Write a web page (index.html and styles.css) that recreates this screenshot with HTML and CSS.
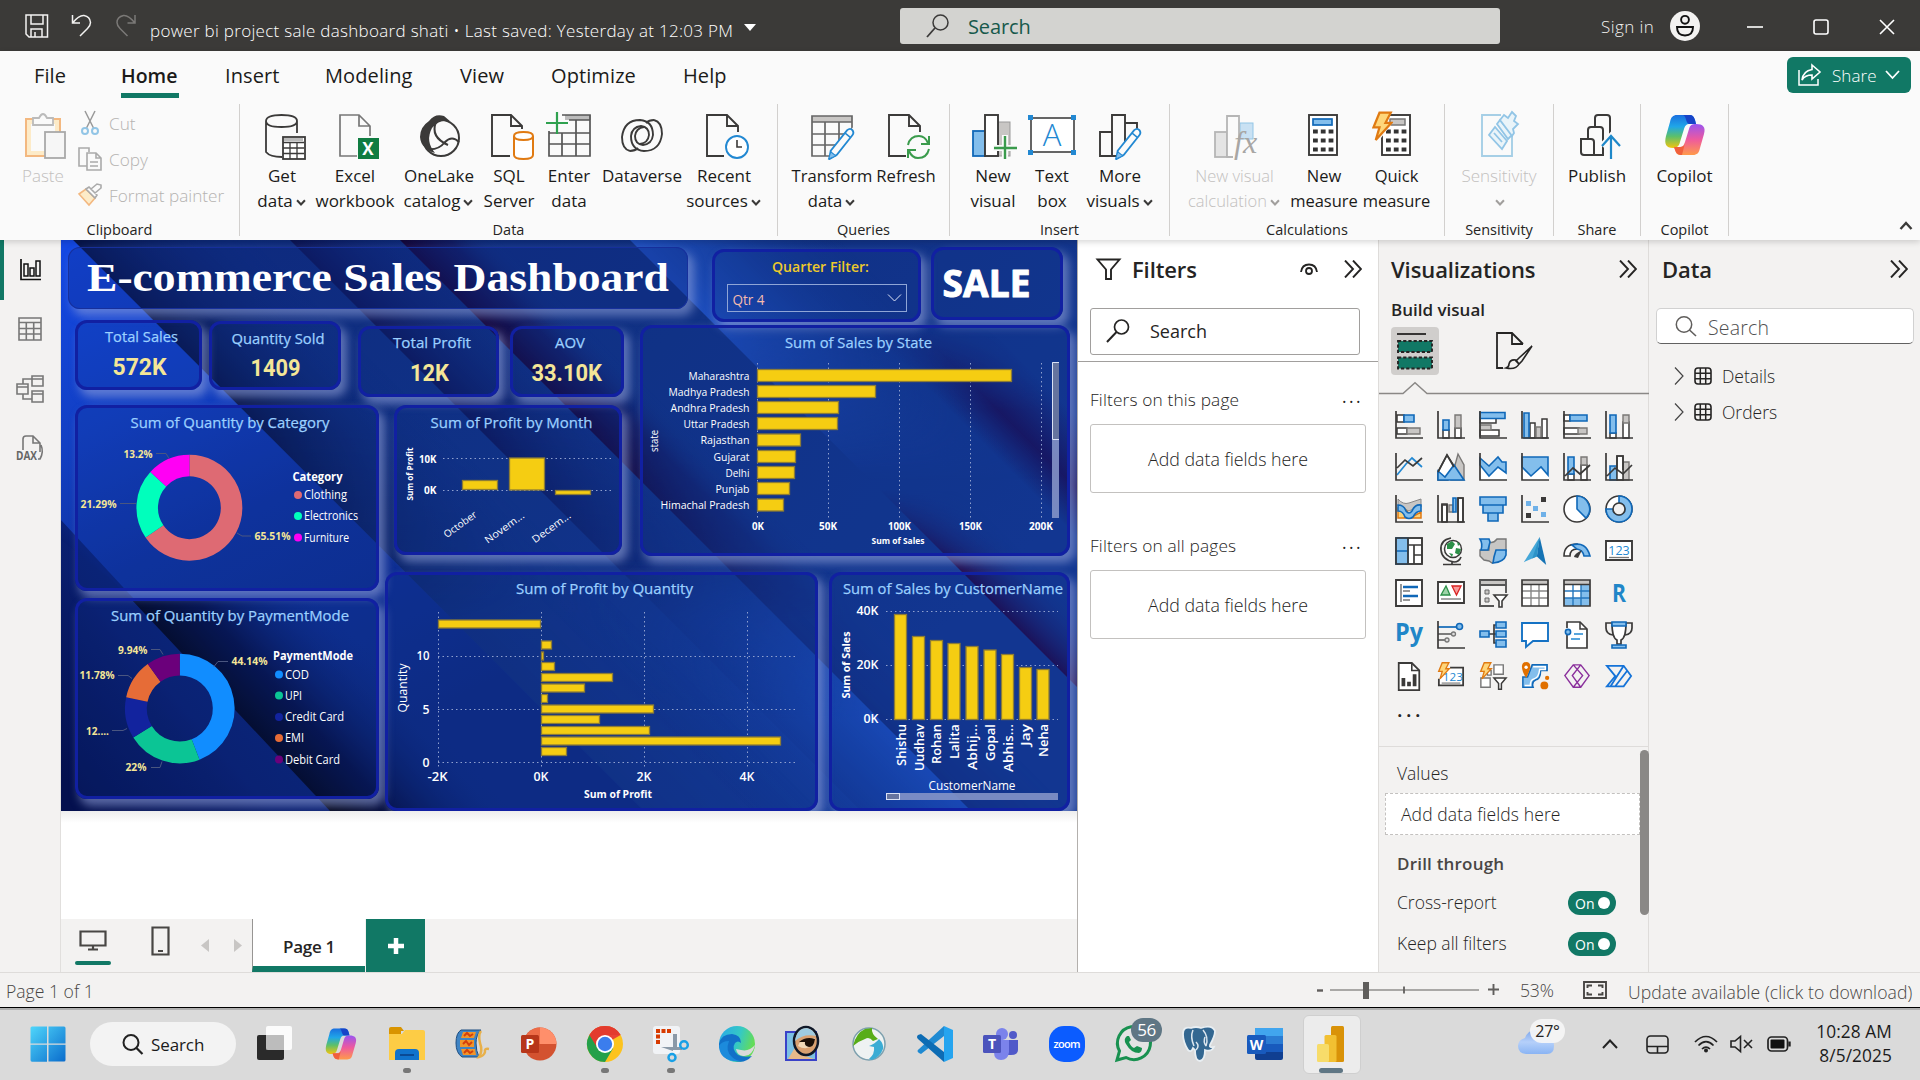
FILE: index.html
```html
<!DOCTYPE html>
<html lang="en">
<head>
<meta charset="utf-8">
<title>power bi project sale dashboard shati</title>
<link rel="stylesheet" href="styles.css">
</head>
<body>
<svg class="defs" width="0" height="0">
  <defs>
    <linearGradient id="cpA" x1="0" y1="0" x2="0" y2="1"><stop offset="0" stop-color="#1a6fe0"/><stop offset=".35" stop-color="#1fa6e8"/><stop offset=".65" stop-color="#5cc06a"/><stop offset="1" stop-color="#f2c40e"/></linearGradient>
    <linearGradient id="cpB" x1="0" y1="0" x2="0" y2="1"><stop offset="0" stop-color="#9a54f0"/><stop offset=".5" stop-color="#ee5a9e"/><stop offset="1" stop-color="#ff9a4a"/></linearGradient>
    <symbol id="copilot" viewBox="0 0 44 44">
      <path d="M14 2h12c4 0 5 2 6 5l1 4h-6c-4 0-5 2-6 5l-4 13c-1 4-3 6-7 6-7 0-9-4-7-12L7 9c1-5 3-7 7-7z" fill="url(#cpA)"/>
      <path d="M20 2h6c4 0 5 2 6 5l1 4h-7c-3 0-3-9-6-9z" fill="#1744c8"/>
      <path d="M30 42H18c-4 0-5-2-6-5l-1-3h5c4 0 5-2 6-5l4-13c1-4 3-5 7-5 7 0 10 3 8 10l-4 14c-1 5-3 7-7 7z" fill="url(#cpB)"/>
      <path d="M11 34h6c3 0 4-1 5-4l-3 12c-5 0-6-2-8-8z" fill="#f0603c"/>
    </symbol>
    <symbol id="bolt" viewBox="0 0 14 20"><path d="M5 .8h7.500L9 7.500h4L2.500 19 5 10.500H1z" fill="#fed67a" stroke="#e07a12" stroke-width="1.500"/></symbol>
    <symbol id="pencil" viewBox="0 0 26 32"><path d="M3 23 19 3q3-2.500 5 0t0 5L9 27l-7 4z" fill="#fafafa" stroke="#2288d2" stroke-width="1.800"/><path d="M3 24l5 4-7 3z" fill="#83beec" stroke="#2288d2"/><path d="M17 6l5 4" stroke="#2288d2" stroke-width="1.500"/></symbol>
    <symbol id="dbl" viewBox="0 0 18 18"><path d="M1 .5 9 9l-8 8.500M9 .5 17 9l-8 8.500" fill="none" stroke="#252423" stroke-width="1.900"/></symbol>
    <symbol id="chev" viewBox="0 0 10 8"><path d="M1.500 2 5 5.800 8.500 2" fill="none" stroke="currentColor" stroke-width="1.800"/></symbol>
    <symbol id="tbl" viewBox="0 0 18 18"><rect x="1" y="1" width="16" height="16" rx="3" fill="none" stroke="#252423" stroke-width="1.600"/><path d="M1 6.300h16M1 11.700h16M6.300 1v16M11.700 1v16" stroke="#252423" stroke-width="1.500"/></symbol>
  </defs>
</svg>

<header class="titlebar">
  <svg class="tb-save" width="24" height="24"><path d="M1 1h21.500v22H4L1 20z M6 1v9h12V1M6 23v-8h11v8M10 23v-5" fill="none" stroke="#f3f2f1" stroke-width="1.500"/></svg>
  <svg class="tb-undo" width="22" height="24"><path d="M1.500 1v8H9M1.500 9Q8 1 13 1.500q6 1 6.500 7 0 3-3 6L9 22" fill="none" stroke="#f3f2f1" stroke-width="1.500"/></svg>
  <svg class="tb-undo" width="22" height="24"><path d="M20 1v8h-7.500M20 9Q13.500 1 8.500 1.500 2 3 2 8.500q0 3 3 6l7.500 7.500" fill="none" stroke="#7b7977" stroke-width="1.500"/></svg>
  <span class="doc-name">power bi project sale dashboard shati • Last saved: Yesterday at 12:03 PM</span>
  <svg class="caret" width="12" height="7"><path d="M0 0h12L6 7z" fill="#fff"/></svg>
  <div class="top-search">
    <svg width="24" height="24"><circle cx="14.500" cy="8.500" r="7.500" fill="none" stroke="#3b3a39" stroke-width="1.500"/><path d="M9 14 1 23" stroke="#3b3a39" stroke-width="1.800"/></svg>
    <span>Search</span>
  </div>
  <span class="signin">Sign in</span>
  <svg class="avatar" width="30" height="30"><circle cx="15" cy="15" r="15" fill="#f3f2f1"/><circle cx="15" cy="8.800" r="3.900" fill="none" stroke="#111" stroke-width="1.900"/><path d="M7 16h16q0 8.500-8 8.500T7 16z" fill="none" stroke="#111" stroke-width="1.900"/></svg>
  <div class="win-controls">
    <svg width="16" height="16"><path d="M0 8h16" stroke="#fff" stroke-width="1.600"/></svg>
    <svg width="16" height="16"><rect x="1" y="1" width="14" height="14" rx="2" fill="none" stroke="#fff" stroke-width="1.600"/></svg>
    <svg width="16" height="16"><path d="M1 1l14 14M15 1 1 15" stroke="#fff" stroke-width="1.600"/></svg>
  </div>
</header>

<section class="ribbon">
  <nav class="tabs">
    <span>File</span><span class="active">Home</span><span>Insert</span><span>Modeling</span><span>View</span><span>Optimize</span><span>Help</span>
    <button class="share"><svg width="24" height="24"><path d="M2 7v15h19v-6" fill="none" stroke="#fff" stroke-width="1.500"/><path d="M15 2l8 7-8 7v-4q-7 0-10 5 1-9 10-10.500z" fill="none" stroke="#fff" stroke-width="1.600"/></svg><span>Share</span><svg width="15" height="10"><path d="M1 1l6.500 7L14 1" fill="none" stroke="#fff" stroke-width="1.800"/></svg></button>
  </nav>
  <div class="groups">
    <div class="group g-clip disabled">
      <div class="row">
        <div class="btn"><svg width="44" height="48"><path d="M4 7h34v37H4z" fill="#fdebc8" stroke="#f3b880" stroke-width="2"/><rect x="9" y="12" width="24" height="27" fill="#fafafa"/><path d="M11 6h6q4-8 8 0h6v7H11z" fill="#fafafa" stroke="#bbb" stroke-width="1.800"/><rect x="23" y="20" width="20" height="26" fill="#f6f6f6" stroke="#a9a9a9" stroke-width="1.800"/></svg><p>Paste</p></div>
        <ul class="clip-list">
          <li><svg width="24" height="24"><path d="M7 0l9 18M17 0 8 18" stroke="#999" stroke-width="1.500"/><g fill="none" stroke="#92c5e6" stroke-width="2"><circle cx="7" cy="20" r="3"/><circle cx="17" cy="20" r="3"/></g></svg>Cut</li>
          <li><svg width="24" height="24"><path d="M9 19H1V1h10v4" fill="none" stroke="#aaa" stroke-width="1.600"/><path d="M9 6h9l5 5v12H9zM18 6v5h5M12 15h8M12 19h8" fill="none" stroke="#aaa" stroke-width="1.600"/></svg>Copy</li>
          <li><svg width="24" height="24"><path d="M1 11l7-5 9 9-6 7z" fill="#fdebc8" stroke="#f3b880" stroke-width="1.600"/><path d="M8 6l3-2 8 8-2 3zM13 6l6-5 4 1v3l-6 5z" fill="#fafafa" stroke="#aaa" stroke-width="1.600"/></svg>Format painter</li>
        </ul>
      </div>
      <h6>Clipboard</h6>
    </div>
    <div class="group g-data">
      <div class="row">
        <div class="btn"><svg width="44" height="48"><path d="M6 9v31q4 5 16 5M37 9v12M6 9q0-6 15.500-6T37 9t-15.500 6T6 9z" fill="none" stroke="#3b3a39" stroke-width="1.800"/><rect x="23" y="25" width="22" height="22" fill="#fff" stroke="#3b3a39" stroke-width="1.800"/><path d="M24 26h19v3H24z" fill="#bbb"/><path d="M23 30.500h21M23 36h21M23 41.500h21M30 30v17M37 30v17" stroke="#3b3a39" stroke-width="1.300"/></svg><p>Get<br>data<svg width="12" height="9"><use href="#chev"/></svg></p></div>
        <div class="btn"><svg width="44" height="48"><path d="M24 44H7V3h19l11 11v10M26 3v11h11" fill="none" stroke="#777" stroke-width="1.700"/><rect x="25" y="26" width="21" height="21" fill="#107c41"/><text x="35" y="42.500" class="xl">X</text></svg><p>Excel<br>workbook</p></div>
        <div class="btn"><svg width="44" height="48"><path d="M12 9Q18 1 27 4l7 6Q24 6 15 16q-7 13 3 25Q4 37 3 25 3 15 12 9z" fill="#3b3a39"/><circle cx="24" cy="26" r="18" fill="none" stroke="#3b3a39" stroke-width="2"/><path d="M19 10q-6 15 12 23M9 37q12 2 19-7 7-7 14 0" fill="none" stroke="#3b3a39" stroke-width="2"/></svg><p>OneLake<br>catalog<svg width="12" height="9"><use href="#chev"/></svg></p></div>
        <div class="btn"><svg width="44" height="48"><path d="M23 44H5V3h19l11 11v3M24 3v11h11" fill="none" stroke="#3b3a39" stroke-width="1.900"/><path d="M27 24v19q0 4 9.500 4t9.500-4V24q0-4-9.500-4T27 24q0 4 9.500 4t9.500-4" fill="#fff" stroke="#e07a12" stroke-width="2"/></svg><p>SQL<br>Server</p></div>
        <div class="btn"><svg width="44" height="48"><path d="M18 3h26v5H18z" fill="#bbb"/><path d="M2 19v25h41V3H15M22 8h21M2 21h41M2 32h41M15 21v23M29 8v36" fill="none" stroke="#555" stroke-width="1.700"/><path d="M10 0v22M-1 11h22" stroke="#2fa14f" stroke-width="2.200"/></svg><p>Enter<br>data</p></div>
        <div class="btn"><svg width="44" height="48"><g fill="none" stroke="#3b3a39" stroke-width="1.900"><path d="M10 39Q2 37 2 25 4 8 20 8q13 1 13 15-1 9-10 10-8-1-8-9 1-8 9-9"/><path d="M34 8q8 2 8 14-2 17-18 17-13-1-13-15 1-9 10-10 8 1 8 9-1 8-9 9"/><path d="M10 39q5 0 8-3M34 8q-5 0-8 3"/></g></svg><p>Dataverse</p></div>
        <div class="btn"><svg width="44" height="48"><path d="M22 44H5V3h20l11 11v6M25 3v11h11" fill="none" stroke="#3b3a39" stroke-width="1.900"/><circle cx="35" cy="35" r="11" fill="#fff" stroke="#2288d2" stroke-width="1.900"/><path d="M35 28v7h5" fill="none" stroke="#3b3a39" stroke-width="1.600"/></svg><p>Recent<br>sources<svg width="12" height="9"><use href="#chev"/></svg></p></div>
      </div>
      <h6>Data</h6>
    </div>
    <div class="group g-query">
      <div class="row">
        <div class="btn"><svg width="44" height="48"><path d="M2 4h40v6H2z" fill="#c8c6c4"/><path d="M2 4h40v40H2zM2 10h40M2 22h40M2 33h40M15 10v34M29 10v34" fill="none" stroke="#666" stroke-width="1.700"/><path d="M18 47 44 14v34z" fill="#fafafa"/><use href="#pencil" x="15" y="15" width="32" height="33"/></svg><p>Transform<br>data<svg width="12" height="9"><use href="#chev"/></svg></p></div>
        <div class="btn"><svg width="44" height="48"><path d="M22 44H5V3h20l11 11v6M25 3v11h11" fill="none" stroke="#3b3a39" stroke-width="1.900"/><path d="M24 33q2-9 11-9 6 0 9 7M45 24v8h-8M45 37q-2 9-11 9-6 0-9-7M24 46v-8h8" fill="none" stroke="#3a9b4c" stroke-width="2"/></svg><p>Refresh</p></div>
      </div>
      <h6>Queries</h6>
    </div>
    <div class="group g-insert">
      <div class="row">
        <div class="btn"><svg width="44" height="48"><rect x="2" y="19" width="12" height="25" fill="#83beec" stroke="#1068b8" stroke-width="1.800"/><rect x="27" y="10" width="12" height="34" fill="#c8c6c4" stroke="#999"/><rect x="14" y="3" width="13" height="41" fill="#fff" stroke="#3b3a39" stroke-width="1.900"/><path d="M34 23v24M22 36h24" stroke="#fafafa" stroke-width="6"/><path d="M34 24v23M23 36h23" stroke="#3a9b4c" stroke-width="2.400"/></svg><p>New<br>visual</p></div>
        <div class="btn"><svg width="48" height="48"><rect x="3" y="6" width="43" height="34" fill="#fff" stroke="#555" stroke-width="1.800"/><g fill="#2288d2"><path d="M0 3h5v5H0zM43 3h5v5h-5zM0 38h5v5H0zM43 38h5v5h-5z"/></g><text x="24" y="34" class="bigA">A</text></svg><p>Text<br>box</p></div>
        <div class="btn"><svg width="44" height="48"><path d="M2 20h12v24H2zM14 3h13v41H14zM27 11h12v33H27z" fill="#fafafa" stroke="#3b3a39" stroke-width="1.900"/><path d="M18 47 42 18v30z" fill="#fafafa"/><use href="#pencil" x="14" y="15" width="32" height="33"/></svg><p>More<br>visuals<svg width="12" height="9"><use href="#chev"/></svg></p></div>
      </div>
      <h6>Insert</h6>
    </div>
    <div class="group g-calc">
      <div class="row">
        <div class="btn dim"><svg width="44" height="48"><rect x="2" y="20" width="12" height="25" fill="#e4e4e4" stroke="#b5b5b5" stroke-width="1.800"/><rect x="27" y="11" width="13" height="16" fill="#c9e1f3" stroke="#92c5e6"/><path d="M20 45h-6V4h12v26" fill="#fafafa" stroke="#b5b5b5" stroke-width="1.800"/><text x="21" y="41" class="fx">fx</text></svg><p>New visual<br>calculation<svg width="12" height="9"><use href="#chev"/></svg></p></div>
        <div class="btn"><svg width="44" height="48"><rect x="7" y="3" width="28" height="40" fill="#fff" stroke="#3b3a39" stroke-width="1.900"/><rect x="11" y="7" width="19" height="6" fill="#83beec" stroke="#1068b8" stroke-width="1.700"/><path d="M11 19.500h21M11 28.500h21M11 37.500h21" stroke="#333" stroke-width="4.200" stroke-dasharray="4.800 3"/></svg><p>New<br>measure</p></div>
        <div class="btn"><svg width="44" height="48"><rect x="7" y="3" width="28" height="40" fill="#fff" stroke="#3b3a39" stroke-width="1.900"/><rect x="15" y="7" width="15" height="6" fill="#c8c6c4" stroke="#777" stroke-width="1.500"/><path d="M11 19.500h21M11 28.500h21M11 37.500h21" stroke="#333" stroke-width="4.200" stroke-dasharray="4.800 3"/><path d="M-1-1h17l-3 13 3 1L6 26V31H-1z" fill="#fafafa"/><use href="#bolt" x="-3" y="-1" width="21" height="31"/></svg><p>Quick<br>measure</p></div>
      </div>
      <h6>Calculations</h6>
    </div>
    <div class="group g-sens">
      <div class="row">
        <div class="btn dim"><svg width="44" height="48"><path d="M24 3H5v41h30V24" fill="none" stroke="#a6cfe6" stroke-width="1.900"/><g fill="#eaf4f9" stroke="#92c5e6" stroke-width="1.800"><path d="M18 15 12 23l13 14 5-8zM17 21l8 9M23 8l12 15-4 4L20 12z"/><path d="M23 8l4-5 4 3 4-6 4 4-2 5 4 3-5 5 1 4-2 3z"/></g></svg><p>Sensitivity<br><svg width="12" height="9"><use href="#chev"/></svg></p></div>
      </div>
      <h6>Sensitivity</h6>
    </div>
    <div class="group g-share">
      <div class="row"><div class="btn"><svg width="44" height="48"><path d="M6 27h10q3 0 3 3v13H9q-3 0-3-3zM13 27V18q0-3 3-3h9q3 0 3 3v25h-9M20 15V6q0-3 3-3h9q3 0 3 3v16" fill="none" stroke="#3b3a39" stroke-width="2"/><path d="M36 46V25M27 34l9-10 9 10" fill="none" stroke="#fafafa" stroke-width="6"/><path d="M36 47V25M27 34l9-10 9 10" fill="none" stroke="#1e88c9" stroke-width="2.200"/></svg><p>Publish</p></div></div>
      <h6>Share</h6>
    </div>
    <div class="group g-copilot">
      <div class="row"><div class="btn"><svg width="48" height="46"><use href="#copilot" x="0" y="1" width="48" height="44"/></svg><p>Copilot</p></div></div>
      <h6>Copilot</h6>
    </div>
    <svg class="collapse" width="14" height="10"><path d="M1.500 8 7 2l5.500 6" fill="none" stroke="#3b3a39" stroke-width="2.400"/></svg>
  </div>
</section>

<main class="body">
  <aside class="rail">
    <div class="sel"><svg width="22" height="22"><path d="M1 0v20.500h20" fill="none" stroke="#111" stroke-width="1.700"/><path d="M4 5h4v12H4zM10 9h4v8h-4zM16 2h4v15h-4z" fill="none" stroke="#111" stroke-width="1.500"/></svg></div>
    <div><svg width="24" height="24"><path d="M1 1h22v22H1zM1 5.500h22M1 11.500h22M1 17h22M8.300 5v18M15.700 5v18" fill="none" stroke="#777" stroke-width="1.600"/></svg></div>
    <div><svg width="28" height="28"><path d="M16 1h11v10H16zM1 9h11v10H1zM16 16h11v11H16zM16 4h11M1 12h11M16 19h11M7 9V4h9M7 19v5h9" fill="none" stroke="#777" stroke-width="1.600"/></svg></div>
    <div><svg width="28" height="28"><path d="M7 15V4q0-3 3-3h7l7 7v9M17 1v7h7M25 10q3 7-1 14h-2" fill="none" stroke="#777" stroke-width="1.600"/><text x="0" y="25" class="dax" textLength="21" lengthAdjust="spacingAndGlyphs">DAX</text></svg></div>
  </aside>

  <div class="workspace">
    <div class="canvas">
      <svg class="bg" viewBox="61 240 1016 571" preserveAspectRatio="none">
        <defs>
          <linearGradient id="base" gradientUnits="userSpaceOnUse" x1="200" y1="240" x2="760" y2="811"><stop offset="0" stop-color="#0f2c7e"/><stop offset=".5" stop-color="#113285"/><stop offset="1" stop-color="#143892"/></linearGradient>
          <linearGradient id="gA" gradientUnits="userSpaceOnUse" x1="80" y1="250" x2="330" y2="760"><stop offset="0" stop-color="#1448e2"/><stop offset=".3" stop-color="#123fc2"/><stop offset=".55" stop-color="#0f32a0"/><stop offset="1" stop-color="#0d2a82"/></linearGradient>
          <linearGradient id="g1" gradientUnits="userSpaceOnUse" x1="240" y1="408" x2="330" y2="318"><stop offset="0" stop-color="#071140" stop-opacity=".85"/><stop offset="1" stop-color="#0f2c7e" stop-opacity="0"/></linearGradient>
          <linearGradient id="g2" gradientUnits="userSpaceOnUse" x1="365" y1="315" x2="435" y2="245"><stop offset="0" stop-color="#0d1352" stop-opacity=".9"/><stop offset="1" stop-color="#102b7c" stop-opacity="0"/></linearGradient>
          <linearGradient id="g3" gradientUnits="userSpaceOnUse" x1="500" y1="340" x2="550" y2="290"><stop offset="0" stop-color="#16083e"/><stop offset=".5" stop-color="#131659" stop-opacity=".7"/><stop offset="1" stop-color="#133a8c" stop-opacity="0"/></linearGradient>
          <linearGradient id="g4" gradientUnits="userSpaceOnUse" x1="735" y1="345" x2="840" y2="240"><stop offset="0" stop-color="#1e4ebc"/><stop offset=".4" stop-color="#1944a8" stop-opacity=".8"/><stop offset="1" stop-color="#143892" stop-opacity="0"/></linearGradient>
          <linearGradient id="g5" gradientUnits="userSpaceOnUse" x1="990" y1="450" x2="1050" y2="390"><stop offset="0" stop-color="#1b0a50" stop-opacity="0"/><stop offset=".4" stop-color="#1b0a50" stop-opacity=".85"/><stop offset="1" stop-color="#1b0a50" stop-opacity="0"/></linearGradient>
          <linearGradient id="g6" gradientUnits="userSpaceOnUse" x1="990" y1="600" x2="1030" y2="560"><stop offset="0" stop-color="#200a4c"/><stop offset="1" stop-color="#143892" stop-opacity="0"/></linearGradient>
          <linearGradient id="g7" gradientUnits="userSpaceOnUse" x1="880" y1="720" x2="770" y2="830"><stop offset="0" stop-color="#1c4fc0"/><stop offset="1" stop-color="#143c9c" stop-opacity="0"/></linearGradient>
          <linearGradient id="gB" gradientUnits="userSpaceOnUse" x1="65" y1="780" x2="170" y2="690"><stop offset="0" stop-color="#04104e"/><stop offset="1" stop-color="#0a1f70"/></linearGradient>
          <linearGradient id="gK" gradientUnits="userSpaceOnUse" x1="240" y1="720" x2="345" y2="623"><stop offset="0" stop-color="#020416"/><stop offset=".35" stop-color="#050c3c" stop-opacity=".9"/><stop offset="1" stop-color="#0c2a84" stop-opacity="0"/></linearGradient>
          <linearGradient id="gC" gradientUnits="userSpaceOnUse" x1="70" y1="600" x2="180" y2="510"><stop offset="0" stop-color="#04104e"/><stop offset="1" stop-color="#0c2888" stop-opacity="0"/></linearGradient>
          <linearGradient id="fadeMid" gradientUnits="userSpaceOnUse" x1="0" y1="430" x2="0" y2="620"><stop offset="0" stop-color="#fff"/><stop offset="1" stop-color="#222"/></linearGradient>
          <linearGradient id="fadeHigh" gradientUnits="userSpaceOnUse" x1="0" y1="330" x2="0" y2="480"><stop offset="0" stop-color="#fff"/><stop offset="1" stop-color="#000"/></linearGradient>
          <linearGradient id="rise" gradientUnits="userSpaceOnUse" x1="0" y1="490" x2="0" y2="570"><stop offset="0" stop-color="#000"/><stop offset="1" stop-color="#fff"/></linearGradient>
          <linearGradient id="riseTop" gradientUnits="userSpaceOnUse" x1="0" y1="325" x2="0" y2="410"><stop offset="0" stop-color="#000"/><stop offset="1" stop-color="#fff"/></linearGradient>
          <linearGradient id="riseLow" gradientUnits="userSpaceOnUse" x1="0" y1="560" x2="0" y2="720"><stop offset="0" stop-color="#000"/><stop offset="1" stop-color="#fff"/></linearGradient>
          <mask id="mMid" maskUnits="userSpaceOnUse" x="61" y="240" width="1016" height="571"><rect x="61" y="240" width="1016" height="571" fill="url(#fadeMid)"/></mask>
          <mask id="mHigh" maskUnits="userSpaceOnUse" x="61" y="240" width="1016" height="571"><rect x="61" y="240" width="1016" height="571" fill="url(#fadeHigh)"/></mask>
          <mask id="mRise" maskUnits="userSpaceOnUse" x="61" y="240" width="1016" height="571"><rect x="61" y="240" width="1016" height="571" fill="url(#rise)"/></mask>
          <mask id="mRiseTop" maskUnits="userSpaceOnUse" x="61" y="240" width="1016" height="571"><rect x="61" y="240" width="1016" height="571" fill="url(#riseTop)"/></mask>
          <mask id="mRiseLow" maskUnits="userSpaceOnUse" x="61" y="240" width="1016" height="571"><rect x="61" y="240" width="1016" height="571" fill="url(#riseLow)"/></mask>
        </defs>
        <rect x="61" y="240" width="1016" height="571" fill="url(#base)"/>
        <path d="M290 240H430L1001 811H861z" fill="url(#g2)" mask="url(#mMid)"/>
        <path d="M400 240H500L1071 811H971z" fill="url(#g3)" mask="url(#mMid)"/>
        <path d="M630 240H850L1077 467V687z" fill="url(#g4)" mask="url(#mHigh)"/>
        <path d="M780 240H900L1077 417V537z" fill="url(#g5)" mask="url(#mRiseTop)"/>
        <path d="M800 410H890L1077 597V687z" fill="url(#g6)" mask="url(#mRise)"/>
        <path d="M720 560 971 811H520V560z" fill="url(#g7)" mask="url(#mRiseLow)"/>
        <path d="M73 240H260L831 811H644z" fill="url(#g1)" mask="url(#mMid)"/>
        <path d="M61 240h12L644 811H61z" fill="url(#gA)"/>
        <path d="M61 520 330 811H61z" fill="url(#gC)"/>
        <path d="M61 540 112 580 330 811H61z" fill="url(#gB)" opacity=".85"/>
        <path d="M130 598H410L600 811H330z" fill="url(#gK)"/>
      </svg>

      <div class="card title-card"><svg viewBox="68 247 620 62"><text x="87" y="291" class="dash-title" textLength="582" lengthAdjust="spacingAndGlyphs">E-commerce Sales Dashboard</text></svg></div>
      <div class="card c-sales"><svg viewBox="75 320 127 70"><text x="105" y="342" class="ct" textLength="73" lengthAdjust="spacingAndGlyphs">Total Sales</text><text x="112.500" y="375" class="kpi" textLength="54" lengthAdjust="spacingAndGlyphs">572K</text></svg></div>
      <div class="card c-qty"><svg viewBox="209 321 132 69"><text x="231.500" y="344" class="ct" textLength="93" lengthAdjust="spacingAndGlyphs">Quantity Sold</text><text x="250.500" y="376" class="kpi" textLength="50" lengthAdjust="spacingAndGlyphs">1409</text></svg></div>
      <div class="card c-profit"><svg viewBox="358 326 141 71"><text x="393" y="348" class="ct" textLength="78" lengthAdjust="spacingAndGlyphs">Total Profit</text><text x="410" y="381" class="kpi" textLength="39" lengthAdjust="spacingAndGlyphs">12K</text></svg></div>
      <div class="card c-aov"><svg viewBox="510 326 114 71"><text x="555" y="348" class="ct" textLength="30" lengthAdjust="spacingAndGlyphs">AOV</text><text x="531.500" y="381" class="kpi" textLength="70.500" lengthAdjust="spacingAndGlyphs">33.10K</text></svg></div>
      <div class="card c-filter"><svg viewBox="712 249 209 73"><text x="772" y="272" class="qf" textLength="97" lengthAdjust="spacingAndGlyphs">Quarter Filter:</text><rect x="727.500" y="284.500" width="179" height="27" fill="none" stroke="#8fa5d6"/><text x="732.500" y="304.500" class="qtr" textLength="32" lengthAdjust="spacingAndGlyphs">Qtr 4</text><path d="M888 294.500l6.500 6.500 6.500-6.500" fill="none" stroke="#dfe6f8"/></svg></div>
      <div class="card c-sale"><svg viewBox="931 247 132 73"><text x="942.500" y="297" class="sale" textLength="88" lengthAdjust="spacing">SALE</text></svg></div>

      <div class="card c-state"><svg viewBox="640 325 430 231">
        <text x="785" y="348" class="ct" textLength="147" lengthAdjust="spacingAndGlyphs">Sum of Sales by State</text>
        <path d="M757.500 363v156M828.500 363v156M899.500 363v156M970.500 363v156M1041.500 363v156" class="grid"/>
        <g class="bar"><rect x="757.500" y="369.500" width="254" height="12"/><rect x="757.500" y="385.500" width="118" height="12"/><rect x="757.500" y="401.500" width="81" height="12"/><rect x="757.500" y="417.500" width="80" height="12"/><rect x="757.500" y="434" width="43" height="12"/><rect x="757.500" y="450.500" width="38" height="12"/><rect x="757.500" y="466.500" width="37" height="12"/><rect x="757.500" y="482.500" width="32" height="12"/><rect x="757.500" y="499" width="26" height="12"/></g>
        <g class="lab end"><text x="749.500" y="379.500" textLength="61" lengthAdjust="spacingAndGlyphs">Maharashtra</text><text x="749.500" y="395.500" textLength="81" lengthAdjust="spacingAndGlyphs">Madhya Pradesh</text><text x="749.500" y="411.500" textLength="79" lengthAdjust="spacingAndGlyphs">Andhra Pradesh</text><text x="749.500" y="427.500" textLength="66" lengthAdjust="spacingAndGlyphs">Uttar Pradesh</text><text x="749.500" y="443.500" textLength="49" lengthAdjust="spacingAndGlyphs">Rajasthan</text><text x="749.500" y="460.500" textLength="36" lengthAdjust="spacingAndGlyphs">Gujarat</text><text x="749.500" y="476.500" textLength="24" lengthAdjust="spacingAndGlyphs">Delhi</text><text x="749.500" y="492.500" textLength="34" lengthAdjust="spacingAndGlyphs">Punjab</text><text x="749.500" y="508.500" textLength="89" lengthAdjust="spacingAndGlyphs">Himachal Pradesh</text></g>
        <g class="ax mid"><text x="758" y="530" textLength="12" lengthAdjust="spacingAndGlyphs">0K</text><text x="828" y="530" textLength="18" lengthAdjust="spacingAndGlyphs">50K</text><text x="899.500" y="530" textLength="23" lengthAdjust="spacingAndGlyphs">100K</text><text x="970.500" y="530" textLength="23" lengthAdjust="spacingAndGlyphs">150K</text><text x="1041" y="530" textLength="24" lengthAdjust="spacingAndGlyphs">200K</text></g>
        <text x="898" y="543.500" class="ax2 mid" textLength="53" lengthAdjust="spacingAndGlyphs">Sum of Sales</text>
        <text transform="translate(658 441) rotate(-90)" class="lab mid" textLength="22" lengthAdjust="spacingAndGlyphs">state</text>
        <rect x="1052" y="362" width="7" height="156" fill="#8494c8" opacity=".9"/><path d="M1059 362.500h-6.500v77h6.500" fill="#66749f" stroke="#dbe2f5"/>
      </svg></div>

      <div class="card c-cat"><svg viewBox="75 405 304 186">
        <text x="130.500" y="428" class="ct" textLength="199" lengthAdjust="spacingAndGlyphs">Sum of Quantity by Category</text>
        <g class="donut d1"><path d="M189.400 465.500A42.200 42.200 0 1 1 154.480 531.400" stroke="#de6a73"/><path d="M154.480 531.400A42.200 42.200 0 0 1 158.280 479.200" stroke="#00ffbc"/><path d="M158.280 479.200A42.200 42.200 0 0 1 189.400 465.500" stroke="#ff00f4"/></g>
        <path d="M156 453.500h10l3 5M120 503.500h16M237 533l5 3h9" class="lead"/>
        <g class="pct"><text x="123.500" y="458" textLength="29" lengthAdjust="spacingAndGlyphs">13.2%</text><text x="80.500" y="508" textLength="36" lengthAdjust="spacingAndGlyphs">21.29%</text><text x="254.500" y="540" textLength="36" lengthAdjust="spacingAndGlyphs">65.51%</text></g>
        <text x="292.500" y="480.500" class="lh" textLength="50" lengthAdjust="spacingAndGlyphs">Category</text>
        <circle cx="298" cy="495" r="4" fill="#de6a73"/><circle cx="298" cy="516" r="4" fill="#00ffbc"/><circle cx="298" cy="537.500" r="4" fill="#ff00f4"/>
        <g class="lg"><text x="304" y="499" textLength="43" lengthAdjust="spacingAndGlyphs">Clothing</text><text x="304" y="520" textLength="54" lengthAdjust="spacingAndGlyphs">Electronics</text><text x="304" y="541.500" textLength="45" lengthAdjust="spacingAndGlyphs">Furniture</text></g>
      </svg></div>

      <div class="card c-month"><svg viewBox="394 405 228 150">
        <text x="430.500" y="428" class="ct" textLength="162" lengthAdjust="spacingAndGlyphs">Sum of Profit by Month</text>
        <path d="M443 458.500h169M443 490.500h169" class="grid"/>
        <g class="bar"><rect x="462.500" y="480.500" width="35" height="9"/><rect x="509.500" y="458" width="35" height="32"/><rect x="555.500" y="490.500" width="35" height="4"/></g>
        <g class="ax end"><text x="436.500" y="462.500" textLength="17.500" lengthAdjust="spacingAndGlyphs">10K</text><text x="436.500" y="494" textLength="12.500" lengthAdjust="spacingAndGlyphs">0K</text></g>
        <text transform="translate(412.500 474) rotate(-90)" class="ax2 mid" textLength="53" lengthAdjust="spacingAndGlyphs">Sum of Profit</text>
        <g class="lab sm end"><text transform="translate(477.500 516) rotate(-36)" textLength="38" lengthAdjust="spacingAndGlyphs">October</text><text transform="translate(525 517) rotate(-36)" textLength="46" lengthAdjust="spacingAndGlyphs">Novem...</text><text transform="translate(571.500 517) rotate(-36)" textLength="45" lengthAdjust="spacingAndGlyphs">Decem...</text></g>
      </svg></div>

      <div class="card c-pay"><svg viewBox="75 598 304 201">
        <text x="111" y="621" class="ct" textLength="238" lengthAdjust="spacingAndGlyphs">Sum of Quantity by PaymentMode</text>
        <g class="donut d2"><path d="M179.800 664.600A43.900 43.900 0 0 1 195.600 749.460" stroke="#118dff"/><path d="M195.600 749.460A43.900 43.900 0 0 1 142.530 731.700" stroke="#0bc595"/><path d="M142.530 731.700A43.900 43.900 0 0 1 136.830 699.510" stroke="#12239e"/><path d="M136.830 699.510A43.900 43.900 0 0 1 154.130 672.890" stroke="#e66c37"/><path d="M154.130 672.890A43.900 43.900 0 0 1 179.800 664.600" stroke="#6b007b"/></g>
        <path d="M151 649.500h9l3 5M228 661.500h-10l-4 5M118 675.500h10l4 3M112 730.500h11l4-2M151 767.500h9l2-6" class="lead"/>
        <g class="pct"><text x="118" y="654" textLength="29.500" lengthAdjust="spacingAndGlyphs">9.94%</text><text x="231.500" y="665" textLength="36" lengthAdjust="spacingAndGlyphs">44.14%</text><text x="79.500" y="679" textLength="35" lengthAdjust="spacingAndGlyphs">11.78%</text><text x="86" y="735" textLength="23" lengthAdjust="spacingAndGlyphs">12....</text><text x="125.500" y="771" textLength="21" lengthAdjust="spacingAndGlyphs">22%</text></g>
        <text x="273" y="660" class="lh" textLength="80" lengthAdjust="spacingAndGlyphs">PaymentMode</text>
        <circle cx="279" cy="674.500" r="4" fill="#118dff"/><circle cx="279" cy="695.500" r="4" fill="#0bc595"/><circle cx="279" cy="717" r="4" fill="#12239e"/><circle cx="279" cy="738" r="4" fill="#e66c37"/><circle cx="279" cy="759.500" r="4" fill="#6b007b"/>
        <g class="lg"><text x="285" y="679" textLength="24" lengthAdjust="spacingAndGlyphs">COD</text><text x="285" y="700" textLength="17" lengthAdjust="spacingAndGlyphs">UPI</text><text x="285" y="721" textLength="59" lengthAdjust="spacingAndGlyphs">Credit Card</text><text x="285" y="742" textLength="19" lengthAdjust="spacingAndGlyphs">EMI</text><text x="285" y="764" textLength="55" lengthAdjust="spacingAndGlyphs">Debit Card</text></g>
      </svg></div>

      <div class="card c-pq"><svg viewBox="385 572 433 239">
        <text x="516" y="594" class="ct" textLength="177" lengthAdjust="spacingAndGlyphs">Sum of Profit by Quantity</text>
        <path d="M438.500 612v156M541.500 612v156M644.500 612v156M747.500 612v156M438 656.500h358M438 709.500h358M438 762.500h358" class="grid"/>
        <g class="bar"><rect x="438.500" y="620" width="102" height="8"/><rect x="541.500" y="641" width="10" height="8"/><rect x="541.500" y="652" width="2" height="8"/><rect x="541.500" y="662.500" width="13" height="8"/><rect x="541.500" y="673.500" width="71" height="8"/><rect x="541.500" y="684" width="43" height="8"/><rect x="541.500" y="694.500" width="6" height="8"/><rect x="541.500" y="705" width="112" height="8"/><rect x="541.500" y="715.500" width="58" height="8"/><rect x="541.500" y="726.500" width="108" height="8"/><rect x="541.500" y="737" width="239" height="8"/><rect x="541.500" y="747.500" width="25" height="8"/></g>
        <g class="ax3 end"><text x="429.500" y="660" textLength="13" lengthAdjust="spacingAndGlyphs">10</text><text x="429.500" y="714" textLength="7" lengthAdjust="spacingAndGlyphs">5</text><text x="429.500" y="767" textLength="7" lengthAdjust="spacingAndGlyphs">0</text></g>
        <g class="ax3 mid"><text x="437.500" y="781" textLength="20" lengthAdjust="spacingAndGlyphs">-2K</text><text x="541" y="781" textLength="15" lengthAdjust="spacingAndGlyphs">0K</text><text x="644" y="781" textLength="15" lengthAdjust="spacingAndGlyphs">2K</text><text x="747" y="781" textLength="15" lengthAdjust="spacingAndGlyphs">4K</text></g>
        <text transform="translate(406.500 688) rotate(-90)" class="lab lg2 mid" textLength="49" lengthAdjust="spacingAndGlyphs">Quantity</text>
        <text x="618" y="798" class="ax mid" textLength="68" lengthAdjust="spacingAndGlyphs">Sum of Profit</text>
      </svg></div>

      <div class="card c-cust"><svg viewBox="829 572 241 239">
        <text x="843" y="594" class="ct" textLength="220" lengthAdjust="spacingAndGlyphs">Sum of Sales by CustomerName</text>
        <path d="M886 611.500h172M886 665.500h172M886 719.500h172" class="grid"/>
        <g class="bar"><rect x="894.500" y="614.500" width="12" height="105"/><rect x="912.500" y="636.500" width="12" height="83"/><rect x="930.500" y="640.500" width="12" height="79"/><rect x="948" y="643.500" width="12" height="76"/><rect x="966" y="646.500" width="12" height="73"/><rect x="984" y="650" width="12" height="69.500"/><rect x="1001.500" y="654.500" width="12" height="65"/><rect x="1019.500" y="667.500" width="12" height="52"/><rect x="1037" y="669.500" width="12" height="50"/></g>
        <g class="ax3 end"><text x="878.500" y="615" textLength="22" lengthAdjust="spacingAndGlyphs">40K</text><text x="878.500" y="669" textLength="22" lengthAdjust="spacingAndGlyphs">20K</text><text x="878.500" y="723" textLength="15" lengthAdjust="spacingAndGlyphs">0K</text></g>
        <text transform="translate(850 665) rotate(-90)" class="ax mid" textLength="67" lengthAdjust="spacingAndGlyphs">Sum of Sales</text>
        <g class="nm end"><text transform="translate(906 724) rotate(-90)" textLength="42" lengthAdjust="spacingAndGlyphs">Shishu</text><text transform="translate(923.500 724) rotate(-90)" textLength="47" lengthAdjust="spacingAndGlyphs">Uudhav</text><text transform="translate(941 724) rotate(-90)" textLength="40" lengthAdjust="spacingAndGlyphs">Rohan</text><text transform="translate(959 724) rotate(-90)" textLength="35" lengthAdjust="spacingAndGlyphs">Lalita</text><text transform="translate(977 724) rotate(-90)" textLength="46" lengthAdjust="spacingAndGlyphs">Abhij...</text><text transform="translate(995 724) rotate(-90)" textLength="37" lengthAdjust="spacingAndGlyphs">Gopal</text><text transform="translate(1013 724) rotate(-90)" textLength="48" lengthAdjust="spacingAndGlyphs">Abhis...</text><text transform="translate(1030 724) rotate(-90)" textLength="22" lengthAdjust="spacingAndGlyphs">Jay</text><text transform="translate(1048 724) rotate(-90)" textLength="33" lengthAdjust="spacingAndGlyphs">Neha</text></g>
        <text x="972" y="790" class="lab lg2 mid" textLength="87" lengthAdjust="spacingAndGlyphs">CustomerName</text>
        <rect x="886" y="793" width="172" height="7" fill="#8494c8" opacity=".9"/><rect x="886.500" y="793.500" width="13" height="6" fill="#66749f" stroke="#dbe2f5"/>
      </svg></div>
    </div>
    <div class="below"></div>
    <div class="pagebar">
      <div class="view on"><svg width="28" height="21"><path d="M1.500 1.500h25v14h-25zM14 16v3M9 19.500h10" fill="none" stroke="#484644" stroke-width="2.200"/></svg></div>
      <div class="view phone"><svg width="19" height="30"><path d="M1.500 1.500h16v27h-16z" fill="none" stroke="#484644" stroke-width="2.200"/><path d="M7 25h5" stroke="#484644" stroke-width="2"/></svg></div>
      <svg class="arr" width="8" height="14"><path d="M8 0v13L0 6.500z" fill="#c8c6c4"/></svg>
      <svg class="arr" width="8" height="14"><path d="M0 0v13l8-6.500z" fill="#c8c6c4"/></svg>
      <div class="page">Page 1</div>
      <div class="add"><svg width="18" height="18"><path d="M9 1v16M1 9h16" stroke="#fff" stroke-width="4.500"/></svg></div>
    </div>
  </div>

  <aside class="filters">
    <div class="fhead"><svg width="25" height="23"><path d="M1.500 1.500h22l-8.500 10V21h-5V11.500z" fill="none" stroke="#252423" stroke-width="1.900"/></svg><h2>Filters</h2><svg class="eye" width="18" height="13"><path d="M1 9q1-7.500 8-7.500T17 9" fill="none" stroke="#252423" stroke-width="1.800"/><circle cx="9" cy="8" r="3" fill="none" stroke="#252423" stroke-width="1.800"/></svg><svg width="18" height="18"><use href="#dbl"/></svg></div>
    <div class="fsearch"><svg width="24" height="24"><circle cx="15.500" cy="8" r="7" fill="none" stroke="#252423" stroke-width="1.700"/><path d="M10.500 13 1 23" stroke="#252423" stroke-width="2"/></svg><span>Search</span></div>
    <hr>
    <div class="flabel"><span>Filters on this page</span><i>···</i></div>
    <div class="fdrop">Add data fields here</div>
    <div class="flabel second"><span>Filters on all pages</span><i>···</i></div>
    <div class="fdrop">Add data fields here</div>
  </aside>

  <aside class="viz">
    <div class="vhead"><h2>Visualizations</h2><svg width="18" height="18"><use href="#dbl"/></svg></div>
    <h3>Build visual</h3>
    <div class="vtabs">
      <div class="vt on"><svg width="36" height="38"><path d="M0 2h29" stroke="#252423" stroke-width="1.800"/><g fill="#117865" stroke="#252423" stroke-width="1.900" stroke-dasharray="3.200 2"><rect x="1" y="9" width="34" height="11"/><rect x="1" y="25.500" width="34" height="11"/></g></svg></div>
      <div class="vt"><svg width="38" height="38"><path d="M7 36H1V1h15l11 11M16 1v11h11" fill="none" stroke="#252423" stroke-width="1.800"/><path d="M36 14 23 26l-3 3 3 3 3-3zM20 28q-6-1-7 4 0 3-3 4 10 2 13-4z" fill="#f3f2f1" stroke="#252423" stroke-width="1.600"/></svg></div>
    </div>
    <svg class="vline" width="270" height="13"><path d="M0 11.500h24L36 .8l12 10.700h222" fill="none" stroke="#8a8886" stroke-width="1.500"/></svg>
    <div class="vgrid">
      <svg viewBox="0 0 28 28"><g class="w"><path d="M2 4h7v7H2zM2 17h10v6H2z"/></g><path class="g" d="M12 17h13v6H12z"/><path class="b" d="M9 4h10v7H9z"/><path class="k" d="M1 0v27h27"/></svg>
      <svg viewBox="0 0 28 28"><path class="w" d="M6 19h6v8H6zM18 17h6v10h-6z"/><path class="g" d="M18 4h6v13h-6z"/><path class="b" d="M6 9h6v10H6z"/><path class="k" d="M1 0v27h27"/></svg>
      <svg viewBox="0 0 28 28"><path class="w" d="M1 7h16v5H1zM1 19h19v6H1z"/><path class="g" d="M1 14h11v5H1z"/><path class="b" d="M1 1.500h25v6H1z"/><path class="k" d="M1 0v27h27"/></svg>
      <svg viewBox="0 0 28 28"><path class="w" d="M9 12h5v15H9zM21 8h5v19h-5z"/><path class="g" d="M15 16h5v11h-5z"/><path class="b" d="M3 2h5v25H3z"/><path class="k" d="M1 0v27h27"/></svg>
      <svg viewBox="0 0 28 28"><path class="w" d="M1 4h6v6H1zM1 17h15v6H1z"/><path class="g" d="M15 17h9v6h-9z"/><path class="b" d="M7 4h17v6H7z"/><path class="k" d="M1 0v27h27"/></svg>
      <svg viewBox="0 0 28 28"><path class="w" d="M5 22h6v5H5zM18 11h6v16h-6z"/><path class="g" d="M18 4h6v8h-6z"/><path class="b" d="M5 4h6v18H5z"/><path class="k" d="M1 0v27h27"/></svg>

      <svg viewBox="0 0 28 28"><path class="bl" d="M2 22 11 11l6-6 10 9"/><path class="k" d="M2 15l8-8 8 6 9-8M1 0v27h27"/></svg>
      <svg viewBox="0 0 28 28"><path class="g" d="M14 27 21 1l6 11v15z"/><path class="w" d="M1 19 10 2l9 14-8 11H1z"/><path class="b" d="M1 18l7 6 9-12 10 15H1z"/><path class="k" d="M1 19 10 2l7 12"/></svg>
      <svg viewBox="0 0 28 28"><path d="M1 12l9 11 9-9 9 8v5H1z" fill="#fff"/><path class="b" d="M1 5l9 8 9-9 4 5h4v11l-8-6-9 9-9-11z"/><path class="k" d="M1 0v27h27"/></svg>
      <svg viewBox="0 0 28 28"><path d="M1 12l9 12 9-10 9 8v5H1z" fill="#fff"/><path class="b" d="M1 4h26v18l-7-8-10 9-9-9z"/><path class="k" d="M1 0v27h27"/></svg>
      <svg viewBox="0 0 28 28"><path class="w" d="M5 21h6v6H5zM18 12h6v15h-6z"/><path class="g" d="M18 4h6v8h-6z"/><path class="b" d="M5 4h6v17H5z"/><path class="k" d="M2 23l8-8 7 6 10-9M1 0v27h27"/></svg>
      <svg viewBox="0 0 28 28"><path class="b" d="M5 13h7v14H5z"/><path class="g" d="M18 9h6v18h-6z"/><path class="w" d="M12 3h6v24h-6z"/><path class="k" d="M2 23l8-8 8 6 9-9M12 16V3h6v14M1 0v27h27"/></svg>

      <svg viewBox="0 0 28 28"><path d="M3 4q5 6 11 4t12-4v8q-6 0-12 4-5-2-11-5z" fill="#c8c6c4" stroke="#888"/><path d="M3 13h6l8 9 9-5v6H3z" fill="#fbd27a" stroke="#e07a12" stroke-width="1.500"/><path class="b" d="M3 10q6 0 8 6 3 4 6 0 3-7 9-6v6q-5 0-8 6-4 3-8 0-2-6-7-6z"/><path class="k" d="M1 0v27h27"/></svg>
      <svg viewBox="0 0 28 28"><path class="w" d="M5 10h5v17H5zM21 3h5v24h-5z"/><path class="g" d="M12 10h4v7h-4z"/><path class="b" d="M16 3h3v14h-3z"/><path class="k" d="M5 27V9h5v18M21 27V3h5v24M1 0v27h27"/></svg>
      <svg viewBox="0 0 28 28"><path class="b" d="M1 2h26v8H1zM4 10h20v8H4zM9 18h10v8H9z"/></svg>
      <svg viewBox="0 0 28 28"><path class="k" d="M1 0v27h27"/><path d="M20 2h5v5h-5zM5 18h5v5H5z" fill="#3b3a39"/><path d="M5 6h5v5H5zM12 11h5v5h-5zM20 17h5v5h-5z" fill="#6fb1e8"/></svg>
      <svg viewBox="0 0 28 28"><circle cx="14" cy="14" r="13" fill="#fff" stroke="#3b3a39" stroke-width="1.600"/><path class="b" d="M14 1a13 13 0 0 1 9 22l-9-9z"/></svg>
      <svg viewBox="0 0 28 28"><circle cx="14" cy="14" r="13" fill="#fff" stroke="#3b3a39" stroke-width="1.600"/><path class="b" d="M14 1A13 13 0 1 1 1 14h7a6 6 0 1 0 6-6z"/><circle cx="14" cy="14" r="6" fill="#f3f2f1" stroke="#3b3a39" stroke-width="1.600"/></svg>

      <svg viewBox="0 0 28 28"><path class="w" d="M1 1h26v26H1z"/><path class="b" d="M1 1h12v26H1zM1 14h12"/><path class="k" d="M13 8h14M13 1v26M19 8v19M19 18h8M1 1h26v26H1z"/></svg>
      <svg viewBox="0 0 28 28"><circle cx="16" cy="12" r="8.500" fill="#fff" stroke="#3b3a39" stroke-width="1.500"/><path d="M10 7l5-3 3 3-3 5-5 0zM19 11l5 1-2 6-4-2zM12 16l4 1-1 3zM20 5l3 2-2 2z" fill="#2c9048"/><path class="k" d="M14 1Q3 3 4 13t13 12q5 0 7-5M15 25v2M6 27.500h18"/></svg>
      <svg viewBox="0 0 28 28"><path d="M10 5q4 2 8-3h9v12l-6 9-5 2-3 1-3-2-5-1-4-4V13h9z" fill="#c8c6c4" stroke="#777" stroke-width="1.400"/><path class="b" d="M1 2h9l1 3-2 8H2q2-6-1-11zM17 13h10v5q-2 7-13 8l1-6z"/></svg>
      <svg viewBox="0 0 28 30"><path d="M19 0 2 27l14-6z" fill="#45a7d8"/><path d="M19 0l7 30-10-9z" fill="#1573b4"/><path d="M19 0 16 21l-5 2z" fill="#2c93c8"/></svg>
      <svg viewBox="0 0 28 28"><path d="M1 19q0-12 13-12v5q-7 0-7 7z" fill="#fff" stroke="#3b3a39" stroke-width="1.600"/><path class="b" d="M9 8q14-4 18 11h-6q-1-6-7-7z"/><path d="M11 20q0-3 8-7l-4 8z" fill="#3b3a39"/></svg>
      <svg viewBox="0 0 28 28"><path d="M1 4h26v19H1z" fill="#fff" stroke="#3b3a39" stroke-width="1.900"/><text x="14" y="17.500" class="n123">123</text><path d="M4 20.500h20" stroke="#777" stroke-width="1.300"/></svg>

      <svg viewBox="0 0 28 28"><path d="M1 1h26v26H1z" fill="#fff" stroke="#3b3a39" stroke-width="1.900"/><path d="M6 5v18M8 12h7M8 21h7" stroke="#777" stroke-width="1.500"/><path d="M8 8h15M8 17h15" stroke="#1068b8" stroke-width="2.400"/></svg>
      <svg viewBox="0 0 28 28"><path d="M1 3h26v21H1z" fill="#fff" stroke="#3b3a39" stroke-width="1.900"/><path d="M4 16 9 7l4 9z" fill="#9ed3a8" stroke="#2c9048" stroke-width="1.300"/><path d="M15 7h9l-4.500 9z" fill="#f79a9a" stroke="#d92323" stroke-width="1.300"/><path d="M4 20h20" stroke="#777" stroke-width="1.300"/></svg>
      <svg viewBox="0 0 28 28"><path d="M1 1h26v5H1z" fill="#c8c6c4"/><path d="M27 14V1H1v26h14M1 6h26" fill="none" stroke="#555" stroke-width="1.900"/><path d="M6 11h4v4H6zM6 19h4v4H6z" fill="#c8c6c4" stroke="#666"/><path d="M15 16h13l-5 6v6h-3v-6z" fill="#fff" stroke="#3b3a39" stroke-width="1.600"/></svg>
      <svg viewBox="0 0 28 28"><path d="M1 1h26v26H1z" fill="#fff"/><path d="M1 1h26v4H1z" fill="#c8c6c4"/><path d="M1 12h26M1 19h26M10 5v22M18 5v22" stroke="#888" stroke-width="1.400"/><path d="M1 1h26v26H1zM1 5.500h26" fill="none" stroke="#3b3a39" stroke-width="1.700"/></svg>
      <svg viewBox="0 0 28 28"><path d="M1 1h26v26H1z" fill="#fff"/><path d="M18 6h9v21H1v-8h17z" fill="#83beec"/><path d="M1 1h26v4H1z" fill="#c8c6c4"/><path d="M1 12h26M1 19h26M10 5v22M18 5v22" stroke="#2677bd" stroke-width="1.400"/><path d="M1 1h26v26H1zM1 5.500h26" fill="none" stroke="#3b3a39" stroke-width="1.700"/></svg>
      <svg viewBox="0 0 28 28"><text x="14" y="23" class="r" textLength="14" lengthAdjust="spacingAndGlyphs">R</text></svg>

      <svg viewBox="0 0 28 28"><text x="14" y="20" class="r" textLength="28" lengthAdjust="spacingAndGlyphs">Py</text></svg>
      <svg viewBox="0 0 28 28"><path d="M1 6h20" stroke="#2677bd" stroke-width="1.900"/><circle cx="22.500" cy="5.500" r="3" class="b"/><path d="M1 13h14M1 19h7" stroke="#555" stroke-width="1.500"/><g fill="#ddd" stroke="#777" stroke-width="1.300"><circle cx="16.500" cy="13" r="2"/><circle cx="10" cy="19" r="2"/></g><path class="k" d="M1 0v27h27"/></svg>
      <svg viewBox="0 0 28 28"><path class="k" d="M10 13h7M20 4h-5v18h5M15 13h5"/><path class="b" d="M1 10h9v6H1zM17 1h10v6H17zM17 10h10v6H17zM17 19h10v7H17z"/></svg>
      <svg viewBox="0 0 28 28"><path d="M1 2h26v18H12l-7 6v-6H1z" fill="#fff" stroke="#1572c4" stroke-width="1.900"/></svg>
      <svg viewBox="0 0 28 28"><path d="M4 7V1h13l7 7v19H4V14" fill="#fff" stroke="#3b3a39" stroke-width="1.700"/><path d="M17 1v7h7" fill="none" stroke="#3b3a39" stroke-width="1.500"/><circle cx="5" cy="11" r="2.600" class="b"/><path d="M11 13h9M8 18h9" stroke="#2288d2" stroke-width="1.500"/></svg>
      <svg viewBox="0 0 28 28"><path d="M7 2H1v5q0 6 7 7M21 2h6v5q0 6-7 7" fill="none" stroke="#3b3a39" stroke-width="1.700"/><path d="M7 2h14q0 15-5 17v4h-4v-4Q7 17 7 2z" fill="#fff" stroke="#3b3a39" stroke-width="1.700"/><path class="b" d="M7 1h14v4H7zM7 24h14v3H7z"/></svg>

      <svg viewBox="0 0 28 30"><path d="M3 0h14l8 8v21H3z" fill="#fff" stroke="#3b3a39" stroke-width="1.900"/><path d="M17 0v8h8" fill="none" stroke="#3b3a39" stroke-width="1.700"/><path d="M6 16h4v9H6zM12 20h4v5h-4zM18 12h4v13h-4z" fill="#3b3a39"/></svg>
      <svg viewBox="0 0 28 30"><path d="M13 5h14v19H1v-7" fill="#fff" stroke="#3b3a39" stroke-width="1.900"/><text x="16" y="19" class="n123">123</text><path d="M4 21.500h20" stroke="#777" stroke-width="1.200"/><use href="#bolt" x="-1" y="-1" width="15" height="19"/></svg>
      <svg viewBox="0 0 28 30"><path d="M15 2h10v10H15zM1 16h10v10H1zM8 8h4v5H8z" fill="#fff" stroke="#777" stroke-width="1.500"/><path d="M15 16h13l-5 6v6h-3v-6z" fill="#fff" stroke="#3b3a39" stroke-width="1.600"/><use href="#bolt" x="-1" y="-1" width="15" height="19"/></svg>
      <svg viewBox="0 0 28 30"><path class="b" d="M11 2h16v6h-7q0 9-5 10-5 2-3 8H1V15h5z"/><path d="M12 4h13v3h-6q-1 9-6 10-4 1-4 7H3" fill="none" stroke="#fff" stroke-width="1.600"/><path d="M4.500-1Q9-1 9 4q0 3-4.500 12Q0 9 0 4q0-5 4.500-5z" fill="#e07000"/><circle cx="4.500" cy="4.500" r="1.800" fill="#fff"/><circle cx="24" cy="24" r="4.200" fill="#e07000"/><circle cx="27" cy="16" r="2.300" fill="#e07000"/></svg>
      <svg viewBox="0 0 28 30"><path d="M10 2h8l9 11.500L18 26h-8L1 13.500zM18 2 9 13.500 18 26M10 2l10 11.500L10 26" fill="none" stroke="#8a2f9c" stroke-width="1.500"/></svg>
      <svg viewBox="0 0 28 30"><path d="M1 3h18l8 11-8 11H1l9-11zM19 3 5 25M23 8 10 25" fill="none" stroke="#1573d8" stroke-width="1.900"/></svg>
    </div>
    <div class="more">···</div>
    <div class="wells">
      <div class="wells-main">
        <p class="wlab">Values</p>
        <div class="well">Add data fields here</div>
        <h4>Drill through</h4>
        <div class="tg"><span>Cross-report</span><b>On<i></i></b></div>
        <div class="tg"><span>Keep all filters</span><b>On<i></i></b></div>
      </div>
      <div class="scroll"></div>
    </div>
  </aside>

  <aside class="data">
    <div class="vhead"><h2>Data</h2><svg width="18" height="18"><use href="#dbl"/></svg></div>
    <div class="dsearch"><svg width="22" height="21"><circle cx="9" cy="8.500" r="7.700" fill="none" stroke="#605e5c" stroke-width="1.500"/><path d="M14.500 14l6.500 6" stroke="#605e5c" stroke-width="1.600"/></svg><span>Search</span></div>
    <div class="drow"><svg width="10" height="18"><path d="M1 .5 9 9 1 17.500" fill="none" stroke="#444" stroke-width="1.200"/></svg><svg width="18" height="18"><use href="#tbl"/></svg>Details</div>
    <div class="drow"><svg width="10" height="18"><path d="M1 .5 9 9 1 17.500" fill="none" stroke="#444" stroke-width="1.200"/></svg><svg width="18" height="18"><use href="#tbl"/></svg>Orders</div>
  </aside>
</main>

<footer class="status">
  <span class="pg">Page 1 of 1</span>
  <svg class="zoombar" width="184" height="20"><path d="M1 10.500h6" stroke="#605e5c" stroke-width="2.400"/><path d="M14 10h149" stroke="#605e5c" stroke-width="1.200"/><path d="M47 2h6v17h-6z" fill="#605e5c"/><path d="M88 6.500v7" stroke="#605e5c" stroke-width="1.800"/><path d="M172 9.500h11M177.500 4v11" stroke="#605e5c" stroke-width="1.900"/></svg>
  <span class="pc">53%</span>
  <svg width="24" height="18"><path d="M1 1h22v16H1z" fill="none" stroke="#484644" stroke-width="1.900"/><path d="M4.500 7V4.500H9M15 4.500h4.500V7M4.500 11v2.500H9M15 13.500h4.500V11" fill="none" stroke="#484644" stroke-width="1.900"/></svg>
  <span class="upd">Update available (click to download)</span>
</footer>

<footer class="taskbar">
  <svg class="start" width="36" height="36"><defs><linearGradient id="win" x1="0" y1="0" x2="1" y2="1"><stop offset="0" stop-color="#4fd6fb"/><stop offset="1" stop-color="#0a6ccc"/></linearGradient></defs><path d="M.5 2q0-1.500 1.500-1.500h15v17H.5zM18.500.5H34q1.500 0 1.500 1.500v15.500h-17zM.5 18.700h16.500v17H2Q.5 35.700.5 34zM18.500 18.700h17V34q0 1.500-1.500 1.500H18.500z" fill="url(#win)"/></svg>
  <div class="pill"><svg width="21" height="21"><circle cx="9" cy="8.500" r="7.500" fill="none" stroke="#222" stroke-width="2"/><path d="M14.500 14l6 6" stroke="#222" stroke-width="2.200"/></svg>Search</div>
  <div class="apps">
    <div><svg width="36" height="36"><rect y="9" width="27" height="25" rx="2" fill="#2a2a2a"/><rect x="9" width="26" height="24" rx="2" fill="#fff" opacity=".88"/><path d="M9 9h18v15H9z" fill="#9a9a9a" opacity=".55"/></svg></div>
    <div><svg width="38" height="34"><use href="#copilot" x="0" y="0" width="38" height="34"/></svg></div>
    <div class="run"><svg width="36" height="34"><path d="M0 2q0-2 2-2h10l3 4h-3v8H0z" fill="#d99400"/><path d="M0 7h13l3-4h18q2 0 2 2v28H0z" fill="#fdcc45"/><path d="M6 33v-7q0-4 4-4h16q4 0 4 4v7z" fill="#1073cc"/><path d="M11 28h14" stroke="#0a4a94" stroke-width="2"/></svg></div>
    <div><svg width="36" height="30"><path d="M6 1h20q-5 5-5 13t3 14H7Q1 24 1 14T6 1z" fill="#3f84c4" stroke="#1d4d80"/><path d="M8 3h13l-2 6H6zM5 11h14v7H5zM6 20h14l1 6H8z" fill="#f0952a"/><path d="M9 7l3-3 3 3 3-2M8 15l3-3 3 4 3-3M9 24l3-3 3 3 3-2" fill="none" stroke="#d4400c" stroke-width="2"/><path d="M26 2q-3 4-1 12 3 8-1 14 5-1 6-5-1-4 4-3" fill="none" stroke="#e8b04a" stroke-width="2.500"/></svg></div>
    <div><svg width="36" height="34"><circle cx="19" cy="17" r="16.500" fill="#d35230"/><path d="M19 .5A16.500 16.500 0 0 1 35.500 17H19z" fill="#ff8f6b"/><path d="M19 .5V17H3A16 16 0 0 1 19 .5z" fill="#ed6c47"/><rect y="8" width="18" height="18" rx="1.500" fill="#b7361a"/><text x="9" y="22" class="app">P</text></svg></div>
    <div class="run"><svg width="36" height="36"><circle cx="18" cy="18" r="18" fill="#fcc31e"/><path d="M18 18 2.400 9A18 18 0 0 1 33.600 9z" fill="#ea4335"/><path d="M2.400 9A18 18 0 0 0 18 36l8-13.500L18 18z" fill="#23a04a"/><path d="M18 9h15.600a18 18 0 0 0-31.200 0l8 13z" fill="#e33b2e"/><circle cx="18" cy="18" r="9" fill="#fff"/><circle cx="18" cy="18" r="7.200" fill="#3b7ded"/></svg></div>
    <div class="run"><svg width="36" height="36"><rect width="27" height="28" rx="3" fill="#f1f3f6"/><path d="M5 18V5h14" fill="none" stroke="#d83b01" stroke-width="4" stroke-dasharray="4 1.500"/><path d="M20 8h4v13h5v3h-9zM8 21h12v4z" fill="#8a99a8"/><g fill="none" stroke="#18a0e6" stroke-width="2.500"><circle cx="31" cy="19" r="3.800"/><circle cx="19" cy="31.500" r="3.500"/></g></svg></div>
    <div><svg width="36" height="36"><defs><linearGradient id="ed" x1="0" y1="0" x2="1" y2=".3"><stop offset="0" stop-color="#28a8ea"/><stop offset=".6" stop-color="#35c9c4"/><stop offset="1" stop-color="#64dc58"/></linearGradient></defs><circle cx="18" cy="18" r="18" fill="url(#ed)"/><path d="M0 18Q2 8 13 8q9 1 9 9-3-3-6 0-4 6 3 12 6 3 14 1-7 8-17 5Q1 31 0 18z" fill="#1271c8"/><path d="M10 15q-4 10 3 16 4 4 10 4Q1 37 0 20q3-5 10-5z" fill="#1c8bdc"/><path d="M22 24q8 2 14-5-3 12-12 11-6-1-7-7z" fill="#dadada"/></svg></div>
    <div><svg width="36" height="36"><path d="M1 6h30v28H1z" fill="#7cc0e4" stroke="#3a42c8" stroke-width="2"/><path d="M3 33l8-13 10 10 8 3z" fill="#e6b98a"/><ellipse cx="21" cy="15" rx="12" ry="14" fill="#d9a070" stroke="#101828" stroke-width="2.500"/><path d="M10 15q2-13 12-13 6 1 9 8-12-3-21 5z" fill="#9fcbe0"/><path d="M13 20q3-9 17-8-2 3-1 7-8 6-16 1z" fill="#f0d8b8"/><path d="M14 16q7-6 16-3l-1 4q-1 4-5 4-5-1-4-5z" fill="#1c1008"/></svg></div>
    <div><svg width="34" height="34"><circle cx="17" cy="17" r="16" fill="#eef2f2" stroke="#7da0ae" stroke-width="1.500"/><path d="M1 19Q4 6 13 2l7-1q-1 6 6 11l-5 2q-4-5-8-2-6 2-12 7z" fill="#58ad18"/><path d="M17 19q6-2 10-7 5 5 4 10-3 8-11 11l-3-1q6-5 5-12z" fill="#3bacd4"/></svg></div>
    <div><svg width="36" height="36"><path d="M27 0l9 4v28l-9 4z" fill="#25a4ef"/><path d="M27 0 2 23q-3 2 0 4l2 1L27 10z" fill="#1f8ad2"/><path d="M27 36 1 13q-2-2 0-4l3-1 23 18z" fill="#0d6cb4"/></svg></div>
    <div><svg width="36" height="32"><circle cx="19" cy="6" r="6" fill="#7b83eb"/><circle cx="30" cy="7" r="4" fill="#5059c9"/><path d="M22 12h13v10q0 5-7 5h-6z" fill="#5059c9"/><path d="M11 12h15v12q-1 8-8 8t-7-8z" fill="#7b83eb"/><rect y="7" width="18" height="18" rx="1.500" fill="#4b53bc"/><text x="9" y="21" class="app">T</text></svg></div>
    <div><svg width="36" height="36"><rect width="36" height="36" rx="15" fill="#0b5cff"/><text x="18" y="21.500" class="zm" textLength="27">zoom</text></svg></div>
    <div class="badged"><svg width="36" height="36"><path d="M2 34l2.500-9A16.500 16.500 0 1 1 11 31.500z" fill="#fff" fill-opacity=".25" stroke="#189150" stroke-width="3"/><path d="M12 10q-4 3-1 8 5 9 13 9 3-1 3-5l-5-2-3 2q-3-1-5-6l2-2-2-4z" fill="#189150"/></svg><em>56</em></div>
    <div><svg width="34" height="36"><path d="M9 2Q1 0 1 8t5 16q3 3 5-2l2 2q0 11 5 11 5-1 5-11 7 2 9-3-5 1-4-2 5-9 5-14-3-7-14-3-5-2-10 0z" fill="#336791" stroke="#e8eef2" stroke-width="1.800"/><path d="M11 4q-3 7 1 16M21 4q6 7 3 16M14 24q4-4 0-8M24 20q-3-4-1-9" fill="none" stroke="#dce6ee" stroke-width="1.500"/></svg></div>
    <div><svg width="36" height="32"><rect x="8" width="28" height="32" rx="2" fill="#103f91"/><path d="M8 0h28v8H8z" fill="#41a5ee"/><path d="M8 8h28v8H8z" fill="#2b7cd3"/><path d="M8 16h28v8H8z" fill="#185abd"/><rect y="7" width="19" height="19" rx="1.500" fill="#185abd"/><text x="9.500" y="22" class="app">W</text></svg></div>
    <div class="current"><svg width="28" height="36"><rect x="14" width="13" height="36" rx="1.500" fill="#d99208"/><rect x="7.500" y="9" width="12" height="27" rx="1.500" fill="#f2c032"/><rect x="0" y="18" width="12" height="18" rx="1.500" fill="#f7dc6a"/></svg></div>
  </div>
  <div class="weather"><svg width="37" height="26"><defs><linearGradient id="cl" x1="0" y1="0" x2="0" y2="1"><stop offset="0" stop-color="#7ea6ea"/><stop offset=".5" stop-color="#b5d0fa"/><stop offset="1" stop-color="#8ab4f4"/></linearGradient></defs><path d="M8 25q-8-1-8-8 0-6 7-8 3-8 10-8 8 0 10 8 9 0 9 8t-7 8z" fill="url(#cl)"/></svg><em>27°</em></div>
  <svg class="t1" width="16" height="10"><path d="M1 9l7-7.500L15 9" fill="none" stroke="#222" stroke-width="2"/></svg>
  <svg class="t2" width="23" height="19"><rect x="1" y="1" width="21" height="17" rx="3.500" fill="none" stroke="#222" stroke-width="1.600"/><path d="M1 11.500h21M11.500 11.500V18" stroke="#222" stroke-width="1.600"/></svg>
  <svg class="t3" width="24" height="18"><g fill="none" stroke="#222" stroke-width="1.700"><path d="M1 7Q12-4 23 7M4.500 10.500q7.500-7.500 15 0M8 14q4-4 8 0"/></g><circle cx="12" cy="15.500" r="2" fill="#222"/></svg>
  <svg class="t4" width="24" height="18"><path d="M1 6h4l5.500-4.500v15L5 12H1zM14 5l8 8M22 5l-8 8" fill="none" stroke="#222" stroke-width="1.600"/></svg>
  <svg class="t5" width="24" height="16"><rect x="1" y="1" width="19.500" height="14" rx="3.500" fill="none" stroke="#222" stroke-width="1.700"/><rect x="3.500" y="3.500" width="14" height="9" rx="1" fill="#111"/><path d="M22.500 5.500v5" stroke="#222" stroke-width="2.400"/></svg>
  <div class="clock">10:28 AM<br>8/5/2025</div>
</footer>
</body>
</html>
```

FILE: styles.css
```css
*{box-sizing:border-box}
body{margin:0;width:1920px;height:1080px;overflow:hidden;display:flex;flex-direction:column;font-family:"Open Sans","Noto Sans",sans-serif;color:#252423;background:#f3f2f1;font-size:16px}
svg{display:block;flex:none;overflow:visible}
.defs{position:absolute}
h2,h3,h4,h6,p,ul{margin:0;padding:0}
em,i{font-style:normal}

/* title bar */
.titlebar{height:51px;background:#3b3a38;color:#f3f2f1;display:flex;align-items:center;padding-left:25px;flex:none;white-space:nowrap}
.tb-undo{margin-left:22px}
.doc-name{width:583px;margin-left:13px;padding-top:9px;font-size:17px;font-weight:300;letter-spacing:.3px;color:#fff}
.caret{margin-left:11px;margin-top:3px}
.top-search{margin-left:144px;width:600px;height:36px;background:#d3d3d0;border-radius:3px;display:flex;align-items:center;gap:18px;padding:2px 0 0 26px;color:#17594b;font-size:20px;letter-spacing:-.1px}
.top-search svg{margin-top:-2px}
.signin{margin-left:101px;width:54px;font-size:17px;font-weight:300;padding-top:2px;letter-spacing:.4px}
.avatar{margin-left:15px}
.win-controls{display:flex;gap:50px;margin-left:47px;padding-top:3px}

/* ribbon */
.ribbon{height:189px;background:#fafafa;flex:none;box-shadow:0 2px 6px rgba(0,0,0,.16);position:relative;z-index:2}
.tabs{height:53px;display:grid;grid-template-columns:87px 104px 100px 135px 91px 132px 1fr 124px;padding:6px 9px 0 34px;font-size:20px;line-height:37px;color:#1b1a19;white-space:nowrap}
.tabs span{letter-spacing:.1px}
.tabs .active{font-weight:600;width:58px;height:41px;border-bottom:5px solid #117865;font-size:19.500px;letter-spacing:0}
.share{height:36px;border:0;border-radius:6px;background:#117865;color:#fff;font:300 17px "Open Sans",sans-serif;display:flex;align-items:center;gap:8px;padding:0 10px}
.share span{margin-left:3px}
.groups{display:flex;height:133px}
.group{border-right:1px solid #d2d0ce;display:flex;flex-direction:column;height:132px}
.row{display:grid;padding-top:8px;height:116px;flex:none}
.btn{display:flex;flex-direction:column;align-items:center;white-space:nowrap;min-width:0;font-size:17px;line-height:25px;text-align:center;color:#1b1a19}
.btn>svg{height:48px;margin-bottom:3px}
.btn p svg{display:inline-block;margin-left:2px;vertical-align:0;color:#3b3a39}
.btn.dim,.disabled .btn{color:#c2c0be;font-weight:300}
.btn.dim p svg{color:#a19f9d}
.group h6{font-size:14.500px;font-weight:400;line-height:20px;text-align:center;color:#252423;white-space:nowrap;flex:none}
.g-clip{width:240px}.g-clip .row{grid-template-columns:44px 1fr;padding-left:22px}
.g-clip .btn{align-items:flex-start}
.clip-list{list-style:none;padding:0 0 0 12px;margin-top:-7px}
.clip-list li{height:36px;display:flex;align-items:center;gap:7px;font-size:17.200px;font-weight:300;color:#b5b3b1;white-space:nowrap}
.g-data{width:538px}.g-data .row{grid-template-columns:56px 90px 78px 62px 58px 88px 76px;padding-left:14px}
.g-query{width:172px}.g-query .row{grid-template-columns:78px 70px;padding-left:15px}
.g-query .btn{font-size:16.600px}
.g-insert{width:220px}.g-insert .row{grid-template-columns:48px 70px 66px;padding-left:19px}
.g-calc{width:275px}.g-calc .row{grid-template-columns:103px 76px 69px;padding-left:13px}
.g-calc .btn{font-size:16.500px}
.g-sens{width:109px}.g-share{width:87px}.g-copilot{width:88px}
.collapse{margin:117px 0 0 170px}
.xl{font:bold 17px "Open Sans",sans-serif;fill:#fff;text-anchor:middle}
.bigA{font:300 31px "Open Sans",sans-serif;fill:#2288d2;text-anchor:middle}
.fx{font:italic 32px "Liberation Serif",serif;fill:#a8a6a4}

/* body */
.body{display:flex;height:732px;flex:none}
.rail{width:61px;display:flex;flex-direction:column;border-right:1px solid #e1dfdd}
.rail div{height:60px;display:flex;align-items:center;justify-content:center;padding-bottom:2px}
.rail .sel{border-left:4px solid #117865;padding-right:3px;padding-bottom:1px}
.dax{font:bold 13px "Open Sans",sans-serif;fill:#666}
.workspace{width:1017px;display:flex;flex-direction:column;border-right:1px solid #b3b0ad}
.canvas{height:571px;position:relative;overflow:hidden}
.bg{width:1016px;height:571px}
.below{height:108px;background:linear-gradient(#ededed,#fff 12px)}

/* visuals are placed freely on the report canvas */
.card{position:absolute;border-radius:12px;background:rgba(14,48,140,.22);box-shadow:inset 0 0 0 3px #1120a2,5px 6px 10px 1px rgba(150,165,220,.58)}
.card svg{width:100%;height:100%}
.title-card{left:7px;top:7px;width:620px;height:62px;background:rgba(14,40,130,.3);box-shadow:inset 0 0 0 1px #17309c,5px 6px 10px 1px rgba(150,165,220,.55)}
.c-sales{left:14px;top:80px;width:127px;height:70px}
.c-qty{left:148px;top:81px;width:132px;height:69px}
.c-profit{left:297px;top:86px;width:141px;height:71px}
.c-aov{left:449px;top:86px;width:114px;height:71px}
.c-filter{left:651px;top:9px;width:209px;height:73px}
.c-sale{left:870px;top:7px;width:132px;height:73px}
.c-state{left:579px;top:85px;width:430px;height:231px}
.c-cat{left:14px;top:165px;width:304px;height:186px}
.c-month{left:333px;top:165px;width:228px;height:150px}
.c-pay{left:14px;top:358px;width:304px;height:201px}
.c-pq{left:324px;top:332px;width:433px;height:239px}
.c-cust{left:768px;top:332px;width:241px;height:239px}
.card text{font-family:"Open Sans",sans-serif;fill:#fff}
.card .dash-title{font:bold 41px "Liberation Serif",serif}
.card .ct{font-size:15px;fill:#9bd0ff;stroke:#9bd0ff;stroke-width:.25}
.card .kpi{font:bold 24px Roboto,sans-serif;fill:#f4e697}
.card .qf{font-size:15px;font-weight:600;fill:#ecc92c}
.card .qtr{font-size:15px;fill:#f6bcae}
.card .sale{font:bold 37px "Open Sans",sans-serif;stroke:#fff;stroke-width:1;stroke-linejoin:round}
.card .lab,.lab text{font-size:10.500px}
.card .sm text{font-size:10px}
.card .lg2{font-size:12px}
.card .ax,.ax text{font-size:11px;font-weight:700}
.card .ax2{font-size:9.500px;font-weight:700}
.ax3 text{font-size:13px;font-weight:600}
.nm text{font-size:13px;font-weight:600}
.card .pct text{font-size:11px;font-weight:700;fill:#f4e697}
.card .lh{font-size:12px;font-weight:700}
.lg text{font-size:12px}
.end text{text-anchor:end}
.mid,.mid text{text-anchor:middle}
.grid{stroke:#8fa0cf;stroke-width:1;stroke-dasharray:1.500 3;fill:none}
.bar rect{fill:#f5cd12;stroke:#8c7c36;stroke-width:1.300}
.donut path{fill:none}
.d1 path{stroke-width:21.500}
.d2 path{stroke-width:21.800}
.lead{fill:none;stroke:#4a5680;stroke-width:1}

/* page bar */
.pagebar{height:53px;display:flex;align-items:center;background:#f3f2f1}
.view{height:53px;display:flex;justify-content:center;width:36px;margin-left:14px;padding-top:11px;position:relative}
.view.on::after{content:"";position:absolute;left:0;bottom:7px;width:36px;height:4px;border-radius:2px;background:#117865}
.phone{width:19px;margin-left:40px;padding-top:7px}
.arr{margin-left:31px}
.arr+.arr{margin-left:25px}
.page{width:113px;height:53px;margin-left:10px;background:#fff;border-left:1px solid #979593;border-bottom:6px solid #117865;font-weight:600;font-size:17px;letter-spacing:-.3px;text-align:center;line-height:55px}
.add{width:59px;height:53px;background:#117865;display:flex;align-items:center;justify-content:center;margin-left:1px}

/* filters */
.filters{width:301px;background:#fff;border-right:1px solid #dedcda;padding-top:18px}
.fhead,.vhead{display:flex;align-items:center;height:22px}
.fhead{padding-left:18px}
h2{font-size:22px;font-weight:600;line-height:22px;letter-spacing:-.1px}
.fhead h2{margin-left:11px;width:168px}
.eye{margin-right:26px}
.fsearch{width:270px;height:47px;margin:28px 0 0 12px;border:1px solid #a19f9d;border-radius:3px;display:flex;align-items:center;padding:0 0 2px 15px;gap:20px;font-size:18px}
.filters hr{margin:6px 0 0;border:0;height:1px;background:#a19f9d}
.flabel{display:flex;justify-content:space-between;margin:25px 15px 11px 12px;height:26px;line-height:26px;font-weight:300;font-size:17.300px;letter-spacing:.15px;white-space:nowrap}
.flabel i{font-weight:400;letter-spacing:2.500px;padding-top:2px}
.flabel.second{margin-top:40px}
.fdrop{width:276px;height:69px;margin-left:12px;border:1px solid #c3c1bf;border-radius:3px;line-height:69px;text-align:center;font-size:17.800px;font-weight:300}

/* visualizations */
.viz{width:270px;padding-top:18px;border-right:1px solid #dedcda;display:flex;flex-direction:column}
.vhead{justify-content:space-between;padding:0 11px 0 12px}
h3{font-size:17px;font-weight:600;line-height:24px;margin:18px 0 0 12px;letter-spacing:0}
.vtabs{display:flex;gap:52px;margin:5px 0 0 12px}
.vt{width:48px;height:48px;display:flex;align-items:center;justify-content:center;border-radius:4px}
.vt.on{background:#d0cecc}
.vline{margin-top:7px}
.vgrid{display:grid;grid-template-columns:repeat(6,28px);gap:14px;padding:16px 0 0 16px}
.vgrid svg{width:28px;height:28px}
.vgrid .k{fill:none;stroke:#3b3a39;stroke-width:1.700}
.vgrid .w{fill:#fff;stroke:#3b3a39;stroke-width:1.500}
.vgrid .g{fill:#c8c6c4;stroke:#7a7876;stroke-width:1.400}
.vgrid .b{fill:#83beec;stroke:#1068b8;stroke-width:1.600}
.vgrid .bl{fill:none;stroke:#2288d2;stroke-width:1.700}
.n123{font:12.500px "Open Sans",sans-serif;fill:#2288d2;text-anchor:middle}
.r{font:bold 25px "Open Sans",sans-serif;fill:#2086c8;text-anchor:middle}
.more{font-size:20px;line-height:20px;height:20px;font-weight:600;margin:15px 0 0 18px;letter-spacing:3.500px}
.wells{margin-top:auto;height:226px;border-top:1px solid #dedcda;display:flex;font-weight:300;font-size:17.500px;flex:none}
.wells-main{width:261px}
.wlab{line-height:24px;margin:14px 0 0 18px}
.well{width:255px;height:42px;margin:8px 0 0 6px;padding-left:15px;background:#fff;border:1px dashed #c3c1bf;line-height:40px;letter-spacing:.1px}
h4{font-size:17px;font-weight:600;line-height:24px;margin:17px 0 0 18px;color:#484644;letter-spacing:.2px}
.tg{display:flex;justify-content:space-between;align-items:center;height:24px;margin:15px 24px 0 18px}
.tg+.tg{margin-top:17px}
.tg span{margin-top:-2px}
.tg b{width:48px;height:24px;border-radius:12px;background:#117865;color:#fff;font-size:14px;font-weight:400;display:flex;align-items:center;gap:4px;padding-left:7px}
.tg b i{width:12px;height:12px;border-radius:50%;background:#fff}
.scroll{width:9px;height:165px;margin-top:3px;border-radius:5px;background:#8a8886;flex:none}

/* data */
.data{width:271px;padding-top:18px}
.data .vhead{padding:0 12px 0 13px}
.dsearch{width:258px;height:36px;margin:28px 0 14px 7px;background:#fff;border:1px solid #d1d1d1;border-bottom:1.500px solid #616161;border-radius:5px;display:flex;align-items:center;padding-left:18px;gap:11px;font-size:19.500px;font-weight:300;color:#505050;letter-spacing:.2px}
.dsearch span{padding-top:2px}
.drow{height:36px;display:flex;align-items:center;padding-left:25px;gap:10px;font-size:17.500px;font-weight:300}

/* status */
.status{height:36px;border-top:1px solid #dedcda;border-bottom:1px solid #000;flex:none;display:flex;align-items:center;font-size:17.600px;font-weight:300;color:#484644;white-space:nowrap}
.pg{width:1310px;padding:2px 0 0 6px}
.zoombar{margin-left:6px}
.pc{margin-left:20px;width:63px;letter-spacing:-.2px}
.upd{margin-left:21px;width:286px;padding-top:3px;letter-spacing:.07px}

/* taskbar */
.taskbar{height:72px;background:#dadada;border-top:2px solid #b0b0b0;padding-bottom:2px;flex:none;display:flex;align-items:center}
.start{margin-left:30px}
.pill{width:146px;height:44px;margin-left:24px;border-radius:22px;background:#f3f3f3;display:flex;align-items:center;padding-left:32px;gap:8px;font-size:17px;letter-spacing:-.1px;color:#1a1a1a}
.apps{display:flex;margin-left:6px;height:70px}
.apps>div{width:66px;display:flex;align-items:center;justify-content:center;position:relative}
.run::after{content:"";position:absolute;left:29px;bottom:6px;width:8px;height:5px;border-radius:3px;background:#777}
.app{font:bold 14px "Open Sans",sans-serif;fill:#fff;text-anchor:middle}
.zm{font:600 11px "Open Sans",sans-serif;fill:#fff;text-anchor:middle}
.badged em{position:absolute;left:31px;top:9px;width:31px;height:24px;border-radius:12px;background:#5f7684;color:#fff;font-size:17px;line-height:24px;text-align:center;letter-spacing:-.5px}
.current::before{content:"";position:absolute;left:5px;top:6px;width:56px;height:57px;border-radius:6px;background:#ececec;border:1px solid #cfcfcf}
.current svg{position:relative}
.current::after{content:"";position:absolute;left:21px;bottom:6px;width:24px;height:5px;border-radius:3px;background:#5f7684}
.weather{width:48px;height:36px;margin-left:154px;display:flex;align-items:flex-end;position:relative;top:-7px}
.weather em{position:absolute;left:12px;top:0;width:35px;height:24px;border-radius:12px;background:rgba(246,246,246,.92);font-size:16px;line-height:24px;text-align:center;letter-spacing:-.2px}
.t1{margin-left:36px}.t2{margin-left:28px}.t3{margin-left:25px}.t4{margin-left:12px}.t5{margin-left:13px}
.clock{margin-left:23px;width:78px;text-align:right;font-size:17.300px;line-height:24px;letter-spacing:.1px;white-space:nowrap;color:#1a1a1a}
```
